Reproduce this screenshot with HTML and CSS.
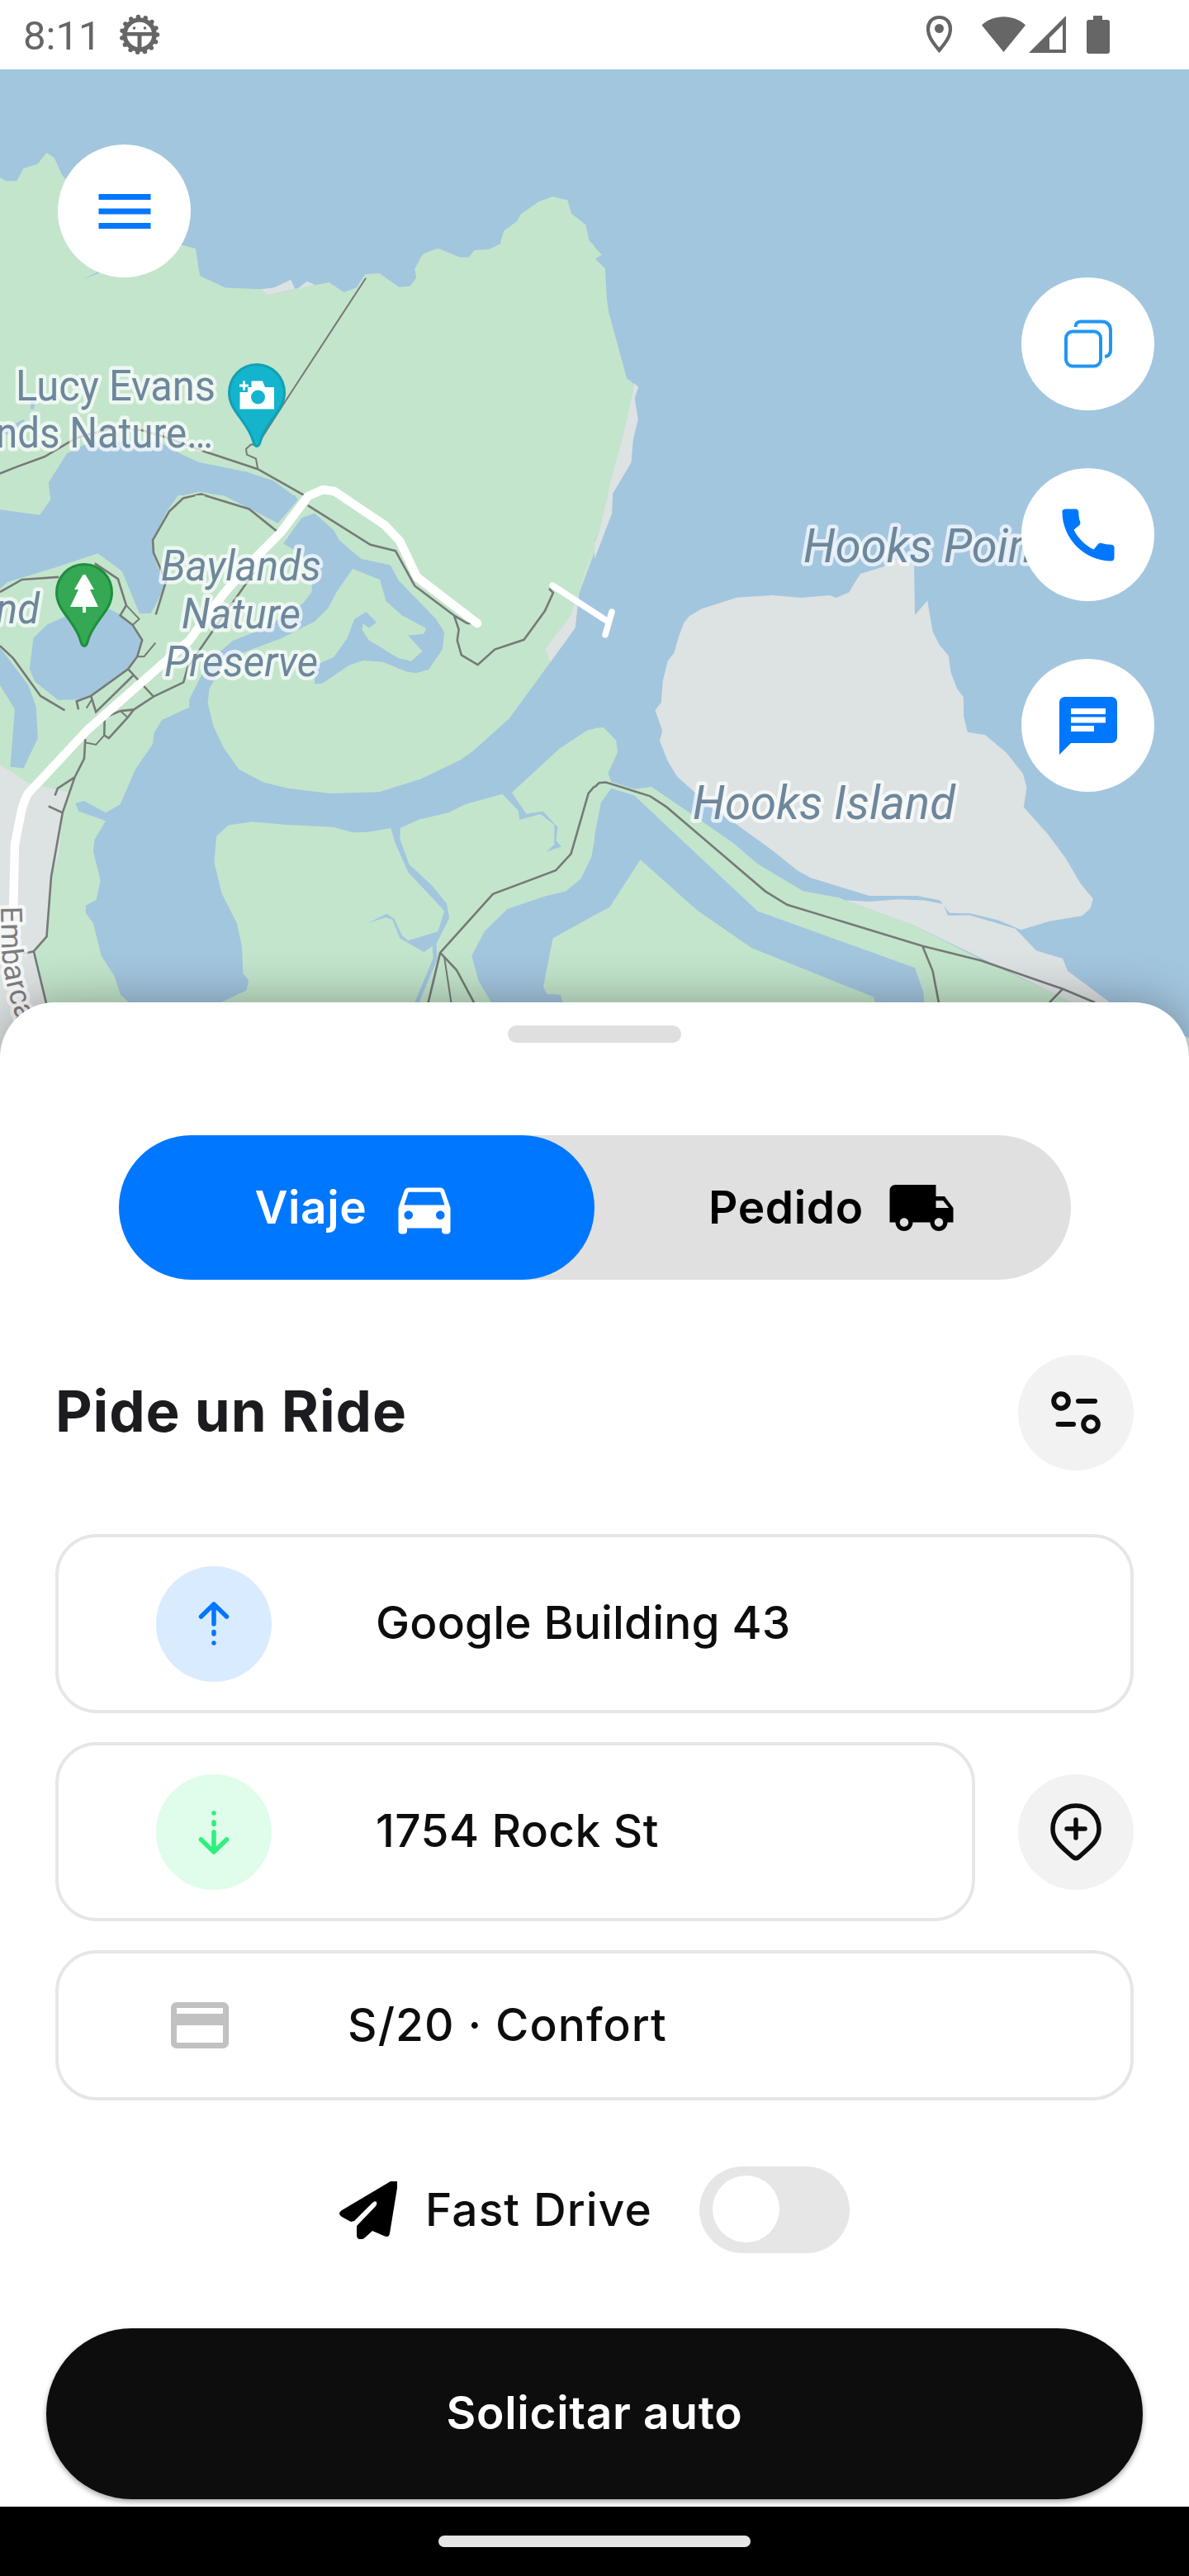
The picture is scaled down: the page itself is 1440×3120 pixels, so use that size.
FILE: index.html
```html
<!DOCTYPE html>
<html lang="es">
<head>
<meta charset="utf-8">
<title>Pide un Ride</title>
<link rel="stylesheet" href="styles.css">
</head>
<body>
<div class="phone">
  <header class="status">
    <span class="clock">8:11</span>
    <svg class="gear" width="50" height="50" viewBox="0 0 50 50">
      <circle cx="25" cy="25" r="18" fill="none" stroke="#666" stroke-width="5.500"/>
      <circle cx="25" cy="25" r="21.500" fill="none" stroke="#666" stroke-width="5.500" stroke-dasharray="0 9" stroke-linecap="round"/>
      <path d="M7 22h36v4.500H27.500v17h-5v-17H7z" fill="#666"/>
      <circle cx="18.500" cy="17" r="1.800" fill="#666"/><circle cx="31.500" cy="17" r="1.800" fill="#666"/>
    </svg>
    <svg class="sys" width="224" height="50" viewBox="0 0 224 50" fill="#666">
      <path d="M16.500 5C26 5 30 12 30 19C30 29 23 37 16.500 45C10 37 3 29 3 19C3 12 7 5 16.500 5Z" fill="none" stroke="#666" stroke-width="4.200"/>
      <circle cx="16.500" cy="18.500" r="5.500"/>
      <path d="M68 14.500C82 .800 107 .800 121 14.500L94.500 47Z"/>
      <path fill-rule="evenodd" d="M125 48L170 3V48ZM150 44H166V14L150 30Z"/>
      <path d="M203 3h11v5h6q3 0 3 3v35q0 3-3 3h-22q-3 0-3-3V11q0-3 3-3h5z"/>
    </svg>
  </header>

  <main class="map">
    <svg class="map-canvas" width="1440" height="1230" viewBox="0 84 1440 1230">
      <svg x="0" y="0" width="720" height="640" viewBox="0 0 1568 1568" preserveAspectRatio="none">
        <rect class="sea" width="1568" height="1568"/>
        <path class="park" d="M0 527L17 537H44L62 500L99 487L123 453L143 468L163 518L175 534L300 700L480 727L516 738L527 818L594 854L687 858L707 876L778 857L832 846L868 838L907 867L940 854L963 814L1000 811L1053 852L1082 849L1098 824L1094 798L1110 764L1118 752L1155 737L1214 764L1236 763L1251 743L1291 739L1319 724L1329 685L1363 657L1374 635L1422 598L1458 583L1497 594L1507 634L1545 667L1554 714L1568 730V1568H0Z"/>
        <path class="land" d="M687 858L722 854L767 830L778 857L707 876ZM784 857L810 835L832 846Z"/>
        <path class="sea" d="M0 1512L104 1529L133 1483L128 1432L176 1346L240 1310H420L480 1349L522 1371L650 1400L722 1427L786 1480L733 1554L680 1525L600 1473L525 1459L466 1475L440 1530L415 1568H0ZM775 1568L796 1536L830 1524L872 1568ZM218 830L262 804V810ZM82 1170L96 1185L88 1215L80 1213ZM0 1282L60 1245L70 1250L20 1290Z"/>
        <path class="trail" d="M0 1405L40 1387L118 1355L200 1300L305 1267L375 1277L430 1295L540 1340L680 1392L806 1472M812 1498L912 1568M420 1568L446 1518L483 1479L530 1466L657 1511L722 1568"/>
        <path class="trail thin" d="M965 825L890 954L753 1190L690 1300M680 1392L675 1361L651 1349L649 1332L662 1319L680 1322"/>
      </svg>
      <svg x="720" y="0" width="720" height="640" viewBox="0 0 1568 1568" preserveAspectRatio="none">
        <rect class="sea" width="1568" height="1568"/>
        <path class="park" d="M0 733L19 756L2 768L28 797L32 880L37 925L85 1122L105 1140L80 1270L12 1568H0Z"/>
        <path class="land" d="M105 1138L116 1148L106 1183L115 1244L102 1305L97 1372L48 1465L46 1525L34 1568H10L80 1270Z"/>
      </svg>
      <svg x="0" y="600" width="720" height="714" viewBox="0 0 1568 1646" preserveAspectRatio="none">
        <rect class="park" width="1568" height="1646"/>
        <path class="sea" d="M0 40L105 55L133 12V0H470L440 45L402 125L404 160L415 200L440 240L411 305L398 329L368 330L322 212L258 162L145 202L20 242L0 260ZM590 0H778L786 12L733 78L655 35Z"/>
        <path class="sea" d="M88 398L125 360L200 325L290 318L318 333L350 362L373 400L362 445L338 485L240 560L205 570L154 572L92 520L78 485ZM0 425L75 530L95 590L100 678L62 762L27 758L39 597L0 530Z"/>
        <path class="sea" d="M747 135L796 62L830 50L880 97L895 125L952 177L1030 195L1051 237L1102 293L1150 345L1172 382L1167 430L1130 487L1097 496L1072 492L1010 465L957 461L920 475L850 525L830 527V475L880 452L915 400L935 345L966 325L993 355L973 370L957 358L955 375L973 404L1050 454L1085 463L1114 435L1076 391L1118 387L1124 371L1060 335L1018 295L1002 235L930 205L888 270L865 315L830 352L740 400L640 440L590 470L552 540L548 580L563 645L590 705L630 765L695 801L760 818L870 832L1000 828L1110 792L1215 738L1250 712L1343 623L1452 465L1517 370L1527 275L1568 160V652L1550 655L1475 708L1350 830L1388 889L1432 882L1471 926L1467 965L1481 981L1441 995L1462 975V920L1425 890L1370 906L1367 880L1325 834L1228 862L1183 886L1105 905L1056 929L1055 960L1079 1030L1140 1090L1178 1140L1185 1180L1152 1250L1118 1275L1055 1237L1035 1185L1018 1178L970 1195L1020 1168L1040 1182L1060 1228L1076 1243L1155 1218L1172 1160L1077 1053L1042 970L1031 929L970 940L930 941L880 926L750 919L665 911L603 921L571 951L565 1025L585 1112L625 1195L638 1260L641 1335L656 1354L650 1382L582 1416H340L318 1394L302 1343L267 1285L246 1195L226 1166V1145L254 1129L265 1075L246 995L249 962L279 909L207 882L199 860L222 853L279 886L317 863L357 765L403 694L406 664L427 627L499 592V570L530 505L560 455L615 405L700 370L800 300L822 270L825 210L790 160Z"/>
        <path class="sea" d="M1568 960L1560 1010L1532 1070L1493 1105L1436 1120L1338 1155L1278 1217L1244 1285L1262 1355L1296 1416H1485L1478 1395L1442 1392L1433 1372L1458 1237L1568 1172Z"/>
        <path class="stream" d="M1145 1250L1148 1293L1098 1420"/>
        <path class="land" d="M0 752L79 805L180 828L165 885L155 1000L133 1075L122 1232L89 1273L120 1416L140 1646H0ZM1568 130L1548 205L1527 275L1517 370L1452 465L1438 430L1505 335L1527 275L1545 205Z"/>
        <path class="trail" d="M0 270L58 235L155 228M250 190L311 233L333 307L317 335L350 362L375 404L362 450L338 485L240 560L202 575L207 598M338 485L405 562L484 522L495 480L560 380L670 215M405 562L353 598L318 602L276 620L275 670L287 678L337 620L353 598M240 560L253 605L352 502M0 420L35 455L107 560L171 600M225 680L222 735L197 787L165 886L135 1065L123 1232L89 1273L122 1418M197 787L152 818L145 838M165 886L128 868M89 1273L60 1280M411 333L438 240L405 160L403 125L446 45L483 8L515 0M540 0L657 38L730 100M812 28L977 138L1043 155L1094 253L1200 337L1232 357H1245M1198 337L1210 374L1206 405L1217 446L1260 473L1305 430L1382 403L1437 323L1459 272L1448 260M1568 812L1552 832L1506 1001L1466 1047L1300 1113L1161 1277L1129 1418M1161 1277L1204 1325L1250 1416"/>
        <path class="trail thin" d="M333 307L367 345L350 362M362 450H380L410 412M318 602L337 620M275 670L253 696L224 690M242 570L228 594M1172 1290L1190 1416"/>
      </svg>
      <svg x="720" y="600" width="720" height="714" viewBox="0 0 1568 1646" preserveAspectRatio="none">
        <rect class="sea" width="1568" height="1646"/>
        <path class="park" d="M0 0H34L12 100L0 125ZM0 650L24 648L57 684L61 717L36 775L44 800L105 820L150 814L250 885L365 970L430 1029L550 1105L645 1123L660 1130L840 1200L1000 1285L1240 1405L1260 1416H870L867 1385L845 1319L430 1161L105 838L44 818L17 858L0 950ZM121 1017L270 1158L415 1264L735 1400L741 1416H0V1172L40 1150Z"/>
        <path class="land" d="M34 0H48L46 50L0 178V130L12 100ZM160 600L176 578L180 520L193 463L210 440L222 395L236 355L250 337L282 317L375 285L470 279L545 286L620 279L637 286L671 271L701 219L760 200L797 178L843 195L845 334L878 294L892 380L910 418L934 448L940 495L957 541L973 563L974 618L984 661L1031 669L1087 719L1130 777L1140 816L1132 870L1195 945L1244 1015L1282 1084L1315 1126L1308 1153L1286 1174L1200 1189L1125 1213L1065 1186L990 1167L936 1166L911 1131L850 1118H725L570 1068L535 1047L470 992L370 915L305 870L265 830L218 785L193 742L172 685L179 657Z"/>
        <path class="land" d="M660 1130L725 1134L800 1128L870 1131L920 1141L932 1173L990 1172L1110 1210L1165 1271L1235 1293L1248 1328L1360 1416L1568 1515V1646H1400L1260 1416L1090 1328L840 1200Z"/>
        <path class="trail" d="M0 815L12 803L30 801L147 840L190 870L450 1105L508 1143L865 1258L1020 1299L1235 1378L1320 1416M865 1258L892 1328L908 1416M1235 1378L1200 1416"/>
      </svg>

      <g class="road">
        <path stroke-width="10.500" d="M16 1105L18 1023L26 982Q29 970 34 961L106 884L229 776L271 719L305 680L340 645L373 601L391 593L405 595L466 636L484 655L505 699L578 755"/>
        <path stroke-width="7.500" d="M669 709L735 752M741 741L733 769"/>
      </g>

      <g class="label">
        <text x="261" y="484.500" text-anchor="end" textLength="242" lengthAdjust="spacingAndGlyphs">Lucy Evans</text>
        <text x="258" y="541.500" text-anchor="end" textLength="263" lengthAdjust="spacingAndGlyphs">nds Nature…</text>
        <text class="slant" x="292" y="703" text-anchor="middle" textLength="194" lengthAdjust="spacingAndGlyphs">Baylands</text>
        <text class="slant" x="292" y="761" text-anchor="middle" textLength="144" lengthAdjust="spacingAndGlyphs">Nature</text>
        <text class="slant" x="292" y="819" text-anchor="middle" textLength="186" lengthAdjust="spacingAndGlyphs">Preserve</text>
        <text class="slant" x="48" y="755" text-anchor="end" textLength="53" lengthAdjust="spacingAndGlyphs">nd</text>
        <text class="slant big" x="973" y="680.500" textLength="278" lengthAdjust="spacingAndGlyphs">Hooks Poin</text>
        <text class="slant big" x="839" y="991.500" textLength="318" lengthAdjust="spacingAndGlyphs">Hooks Island</text>
        <path id="street" d="M1 1098L2 1150Q5 1195 24 1245" fill="none" stroke="none"/>
        <text class="street"><textPath href="#street">Embarca</textPath></text>
      </g>

      <g transform="translate(276 440)">
        <path d="M35 1.500C16 1.500 1.500 17 1.500 36C1.500 58 24 70 30.500 94Q32 100.500 35 100.500Q38 100.500 39.500 94C46 70 68.500 58 68.500 36C68.500 17 54 1.500 35 1.500Z" fill="#14b4cc" stroke="#12a0b6" stroke-width="3"/>
        <path fill="#fff" d="M28.500 21.500H42L45 29H56V55.500H14.500V35H24V29H28.500ZM18 21.500H21V25.500H25V28.500H21V32.500H18V28.500H14V25.500H18Z"/>
        <circle cx="36.500" cy="41" r="8.500" fill="#14b4cc"/>
      </g>
      <g transform="translate(67 682)">
        <path d="M35 1.500C16 1.500 1.500 17 1.500 36C1.500 58 24 70 30.500 94Q32 100.500 35 100.500Q38 100.500 39.500 94C46 70 68.500 58 68.500 36C68.500 17 54 1.500 35 1.500Z" fill="#34a853" stroke="#1e8e3e" stroke-width="3"/>
        <path fill="#fff" d="M33.500 14H36.500L47 32H42L52 53H37V60H33V53H18L28 32H23Z"/>
      </g>
    </svg>

    <button class="fab fab-menu" aria-label="Menú">
      <svg width="84" height="84" viewBox="0 0 24 24" fill="#0077ff"><path d="M3 18h18v-2H3v2zm0-5h18v-2H3v2zm0-7v2h18V6H3z"/></svg>
    </button>
    <div class="fabs">
      <button class="fab" aria-label="Copiar">
        <svg width="62" height="62" viewBox="0 0 62 62" fill="none" stroke="#2196f3" stroke-width="4"><rect x="4" y="15.500" width="42" height="42" rx="8"/><path d="M15.500 10C15.500 6 18 3.500 22 3.500H47Q58 3.500 58 15V38Q58 45 51 46"/></svg>
      </button>
      <button class="fab" aria-label="Llamar">
        <svg width="84" height="84" viewBox="0 0 24 24" fill="#0077ff"><path d="M20.010 15.380c-1.230 0-2.420-.2-3.530-.56-.35-.12-.74-.03-1.010.24l-1.570 1.970c-2.830-1.350-5.480-3.900-6.890-6.830l1.950-1.660c.27-.28.35-.67.24-1.020-.37-1.110-.56-2.300-.56-3.530 0-.54-.45-.99-.99-.99H4.190C3.650 3 3 3.240 3 3.990 3 13.280 10.730 21 20.010 21c.71 0 .99-.63.99-1.180v-3.450c0-.54-.45-.99-.99-.99z"/></svg>
      </button>
      <button class="fab" aria-label="Mensajes">
        <svg width="84" height="84" viewBox="0 0 24 24" fill="#0077ff"><path d="M20 2H4c-1.100 0-2 .9-2 2v18l4-4h14c1.100 0 2-.9 2-2V4c0-1.100-.9-2-2-2zM6 6h12v2H6V6zm8 8H6v-2h8v2zm4-3H6V9h12v2z"/></svg>
      </button>
    </div>
  </main>

  <section class="sheet">
    <div class="handle"></div>
    <div class="tabs">
      <div class="tab active"><span>Viaje</span>
        <svg width="84" height="84" viewBox="0 0 24 24" fill="#fff"><path d="M18.920 6.010C18.720 5.420 18.160 5 17.500 5h-11c-.66 0-1.210.42-1.420 1.010L3 12v8c0 .55.45 1 1 1h1c.55 0 1-.45 1-1v-1h12v1c0 .55.45 1 1 1h1c.55 0 1-.45 1-1v-8l-2.080-5.990zM6.500 16c-.83 0-1.500-.67-1.500-1.500S5.670 13 6.500 13s1.500.67 1.500 1.500S7.330 16 6.500 16zm11 0c-.83 0-1.500-.67-1.500-1.500s.67-1.500 1.500-1.500 1.500.67 1.500 1.500-.67 1.500-1.500 1.500zM5 11l1.500-4.500h11L19 11H5z"/></svg>
      </div>
      <div class="tab"><span>Pedido</span>
        <svg width="84" height="84" viewBox="0 0 24 24"><path d="M20 8h-3V4H3c-1.100 0-2 .9-2 2v11h2c0 1.660 1.340 3 3 3s3-1.340 3-3h6c0 1.660 1.340 3 3 3s3-1.340 3-3h2v-5l-3-4zM6 18.500c-.83 0-1.500-.67-1.500-1.500s.67-1.500 1.500-1.500 1.500.67 1.500 1.500-.67 1.500-1.500 1.500zm13.500-9l1.960 2.500H17V9.500h2.500zm-1.500 9c-.83 0-1.500-.67-1.500-1.500s.67-1.500 1.500-1.500 1.500.67 1.500 1.500-.67 1.500-1.500 1.500z"/></svg>
      </div>
    </div>

    <div class="heading">
      <h1>Pide un Ride</h1>
      <button class="round" aria-label="Filtros">
        <svg width="60" height="54" viewBox="0 0 60 54" fill="none" stroke="#0d0d0d" stroke-width="6" stroke-linecap="round"><circle cx="12" cy="13" r="8.800"/><path d="M33 13H53M8.500 41H27"/><circle cx="48" cy="41" r="8.800"/></svg>
      </button>
    </div>

    <div class="field">
      <span class="dot blue"><svg width="40" height="56" viewBox="0 0 40 56" fill="none" stroke="#0077ff" stroke-width="5.500" stroke-linecap="round" stroke-linejoin="round"><path d="M4.500 19L20 4L35.500 19M20 5V28M20 37.500V40M20 51V51.100"/></svg></span>
      <span class="value">Google Building 43</span>
    </div>
    <div class="row">
      <div class="field grow">
        <span class="dot green"><svg width="40" height="56" viewBox="0 0 40 56" fill="none" stroke="#2ef07c" stroke-width="5.500" stroke-linecap="round" stroke-linejoin="round"><path d="M4.500 37L20 52L35.500 37M20 51V28M20 18.500V16M20 5V4.900"/></svg></span>
        <span class="value">1754 Rock St</span>
      </div>
      <button class="round" aria-label="Agregar parada">
        <svg width="64" height="72" viewBox="0 0 64 72" fill="none" stroke="#0d0d0d" stroke-width="5.500" stroke-linecap="round" stroke-linejoin="round"><path d="M32 4C16 4 4 16 4 32C4 47 15 54 27 65Q32 70 37 65C49 54 60 47 60 32C60 16 48 4 32 4ZM32 21V43M21 32H43"/></svg>
      </button>
    </div>
    <div class="field price">
      <svg width="84" height="84" viewBox="0 0 24 24" fill="#c1c1c1"><path d="M20 4H4c-1.110 0-1.990.89-1.990 2L2 18c0 1.110.89 2 2 2h16c1.110 0 2-.89 2-2V6c0-1.110-.89-2-2-2zm0 14H4v-6h16v6zm0-10H4V6h16v2z"/></svg>
      <span class="value spaced">S/20 · Confort</span>
    </div>

    <div class="fast">
      <svg width="70" height="70" viewBox="0 0 70 70"><path d="M62 0H70V8L61 63Q60 69 54 66L40 60L30 69Q27 71 24 70Q21 69 21 65V54L44 30Q46 27 45 25Q43 23 40 26L18 48L14 49L3 43Q-3 39 3 35Z"/></svg>
      <span class="fast-label">Fast Drive</span>
      <span class="switch"><i></i></span>
    </div>

    <button class="cta"><span>Solicitar auto</span></button>
  </section>

  <footer class="navbar"><div class="pill"></div></footer>
</div>
</body>
</html>
```
FILE: styles.css
```css
* { box-sizing: border-box; }
body { margin: 0; background: #fff; font-family: "Inter", sans-serif; color: #0d0d0d; }
button { border: 0; padding: 0; font: inherit; display: flex; align-items: center; justify-content: center; }
svg { display: block; flex: none; }
.phone { width: 1440px; height: 3120px; display: flex; flex-direction: column; overflow: hidden; }

.status { height: 84px; flex: none; display: flex; align-items: flex-start; padding: 0 95px 0 28px; background: #fff; }
.clock { font: 400 49px/58px "Roboto", sans-serif; color: #666; margin-top: 15px; }
.gear { margin: 17px 0 0 22px; }
.sys { margin: 16px 0 0 auto; }

.map { position: relative; height: 1130px; flex: none; background: #a3c6df; }
.map-canvas { position: absolute; left: 0; top: 0; }
.sea { fill: #a3c6df; }
.park { fill: #c3e5cc; }
.land { fill: #dde2e2; }
.trail { fill: none; stroke: #777a77; stroke-width: 2.6; vector-effect: non-scaling-stroke; }
.thin { stroke-width: 2; }
.stream { fill: none; stroke: #a3c6df; stroke-width: 5; vector-effect: non-scaling-stroke; }
.road { fill: none; stroke: #fff; stroke-linecap: round; stroke-linejoin: round; }
.label { font: 400 52px "Roboto", sans-serif; fill: #6d879c; stroke: rgba(255, 255, 255, .7); stroke-width: 9px; stroke-linejoin: round; paint-order: stroke; }
.slant { font-style: italic; }
.big { font-size: 58px; }
.street { font-size: 36px; fill: #7d7d7d; }

.fab { width: 161px; height: 161px; border-radius: 50%; background: #fff; }
.fab-menu { position: absolute; left: 70px; top: 91px; }
.fabs { position: absolute; left: 1237px; top: 252px; display: flex; flex-direction: column; gap: 70px; }

.sheet { position: relative; flex: 1; display: flex; flex-direction: column; padding: 28px 67px 0; background: #fff; border-radius: 67px 67px 0 0; box-shadow: 0 0 60px rgba(0, 0, 0, .32); font-size: 55px; line-height: 66px; font-weight: 500; white-space: nowrap; }
.handle { width: 210px; height: 21px; border-radius: 11px; background: #dfdfdf; align-self: center; }
.tabs { margin: 112px 76.5px 0; height: 175px; border-radius: 88px; background: #e0e0e0; display: flex; }
.tab { width: 50%; display: flex; align-items: center; border-radius: 88px; padding-left: 138px; color: #000; font-weight: 600; letter-spacing: .6px; }
.tab span { margin-top: -2px; }
.tab.active { background: #0077ff; color: #fff; padding-left: 165px; }
.tab svg { margin-left: 28px; }

.heading { display: flex; align-items: center; justify-content: space-between; margin-top: 91px; height: 140px; }
h1 { margin: -5px 0 0; font-size: 69px; line-height: 84px; font-weight: 700; letter-spacing: .9px; color: #1c1b1f; }
.round { width: 140px; height: 140px; border-radius: 50%; background: #f2f2f2; color: #0d0d0d; }
.field { height: 217px; margin-top: 77px; border: 4px solid #e6e6e6; border-radius: 50px; display: flex; align-items: center; padding-left: 118px; }
.dot { width: 140px; height: 140px; border-radius: 50%; display: flex; align-items: center; justify-content: center; margin-right: 126px; flex: none; }
.value { margin-top: -3px; letter-spacing: .15px; }
.spaced { letter-spacing: 1.1px; }
.blue { background: #d9ebff; }
.green { background: #e0fcea; }
.row { display: flex; align-items: center; gap: 52px; margin-top: 35px; }
.row .field { margin-top: 0; }
.row .value { letter-spacing: .4px; }
.grow { flex: 1; }
.price { height: 182px; margin-top: 35px; padding-left: 129px; }
.price svg { margin-right: 137px; }

.fast { display: flex; align-items: center; height: 105px; margin: 80px 0 0 344px; }
.fast-label { margin: -2px 0 0 34px; width: 275px; letter-spacing: 1.1px; }
.switch { width: 182px; height: 105px; border-radius: 53px; background: #e6e6e6; margin-left: 57px; padding: 11px 16px; }
.switch i { display: block; width: 81px; height: 81px; border-radius: 50%; background: #fff; }
.cta { flex: none; width: 1328px; height: 207px; margin: 91px -11px 0; border-radius: 104px; background: #0d0d0d; color: #fff; font-weight: 600; letter-spacing: .7px; padding-bottom: 3px; box-shadow: 0 3px 6px rgba(0, 0, 0, .35); }

.navbar { height: 84px; flex: none; background: #000; display: flex; align-items: center; justify-content: center; }
.pill { width: 378px; height: 14px; border-radius: 7px; background: #ebebeb; }
```
